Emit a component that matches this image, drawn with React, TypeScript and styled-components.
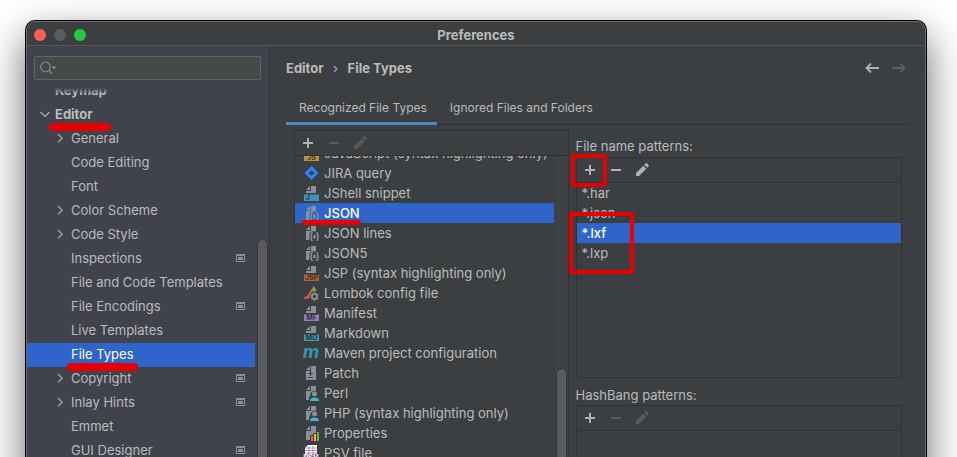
import React from "react";
import styled, { createGlobalStyle, css } from "styled-components";

const GlobalStyle = createGlobalStyle`
  * { box-sizing: border-box; }
  body {
    margin: 0;
    background: #fff;
    font-family: Inter, "Liberation Sans", sans-serif;
    font-size: 13px;
    line-height: 20px;
    color: #bbbbbb;
    overflow: hidden;
  }
  button, input { font: inherit; color: inherit; }
  button { background: none; border: 0; padding: 0; text-align: left; }
  ul { list-style: none; margin: 0; padding: 0; }
`;

const Page = styled.div`
  height: 100vh;
  padding: 21px 31px 0 26px;
  display: flex;
  flex-direction: column;
  overflow: hidden;
`;

const Window = styled.div`
  flex: 1;
  min-height: 0;
  margin-bottom: -80px;
  display: flex;
  flex-direction: column;
  background: #3c3f41;
  border: 1px solid #6b6d6e;
  border-radius: 9px;
  box-shadow: 0 0 0 1px #000, 0 16px 42px rgba(0, 0, 0, 0.62);
`;

const TitleBar = styled.header`
  height: 24px;
  flex: none;
  display: grid;
  grid-template-columns: 1fr auto 1fr;
  align-items: center;
  padding: 2px 7px 0;
  border-bottom: 1px solid #555758;
`;

const Title = styled.h1`
  margin: 0;
  font-size: 13px;
  line-height: 20px;
  font-weight: 700;
`;

const Lights = styled.div`
  display: flex;
  gap: 8px;
`;

const Light = styled.button<{ $color: string }>`
  width: 12px;
  height: 12px;
  border-radius: 50%;
  background: ${(p) => p.$color};
`;

const Body = styled.div`
  flex: 1;
  min-height: 0;
  display: flex;
`;

const Sidebar = styled.nav`
  width: 243px;
  flex: none;
  display: flex;
  flex-direction: column;
  gap: 8px;
  padding-top: 10px;
  background: #40434c;
  border-right: 1px solid #323436;
`;

const SearchBox = styled.label`
  display: flex;
  align-items: center;
  height: 24px;
  margin: 0 8px 0 7px;
  padding-left: 5px;
  border: 1px solid #646464;
  border-radius: 2px;
  background: #45494a;
`;

const SearchInput = styled.input`
  flex: 1;
  min-width: 0;
  border: 0;
  outline: 0;
  background: transparent;
`;

const ScrollArea = styled.div`
  position: relative;
  flex: 1;
  min-height: 0;
  display: flex;
  overflow: hidden;
`;

const Fade = styled.div`
  position: absolute;
  inset: 0 14px auto 0;
  height: 6px;
  background: linear-gradient(#40434c, rgba(64, 67, 76, 0));
`;

const ScrolledList = styled.ul<{ $scroll: number }>`
  flex: 1;
  min-width: 0;
  margin-top: -${(p) => p.$scroll}px;
`;

const Gutter = styled.div<{ $start: number; $tint?: string }>`
  width: 14px;
  flex: none;
  display: flex;
  padding: ${(p) => p.$start}px 2px 0 3px;
  background: ${(p) => p.$tint ?? "transparent"};
`;

const Thumb = styled.div`
  flex: 1;
  background: #585a5c;
  border-radius: 5px 5px 0 0;
  box-shadow: 0 0 0 1px rgba(0, 0, 0, 0.18);
`;

const TreeRow = styled.button<{ $level: number; $selected?: boolean }>`
  position: relative;
  display: flex;
  align-items: center;
  width: 100%;
  height: 24px;
  padding: 0 10px 2px ${(p) => (p.$level === 1 ? 12 : 28)}px;
  white-space: nowrap;
  font-weight: ${(p) => (p.$level === 1 ? 700 : 400)};
  ${(p) =>
    p.$selected &&
    css`
      background: #2f65ca;
      color: #fff;
    `}
`;

const Twisty = styled.span`
  width: 16px;
  height: 12px;
  flex: none;
  display: flex;
`;

const Grow = styled.span`
  flex: 1;
`;

const Main = styled.main`
  flex: 1;
  min-width: 0;
  display: flex;
  flex-direction: column;
  padding: 12px 15px 0 16px;
`;

const Crumbs = styled.div`
  display: flex;
  align-items: center;
  padding-right: 3px;
  font-weight: 700;
`;

const Crumb = styled.a`
  color: inherit;
  text-decoration: none;
`;

const CrumbSep = styled.span`
  width: 24px;
  text-align: center;
  font-weight: 400;
`;

const NavButton = styled.button`
  display: flex;
  margin-left: 11px;
`;

const Tabs = styled.div`
  display: flex;
  margin-top: 17px;
  height: 30px;
  border-bottom: 1px solid #323232;
`;

const Tab = styled.button<{ $active?: boolean }>`
  height: 30px;
  padding: 0 10px 1px 13px;
  border-bottom: 3px solid ${(p) => (p.$active ? "#4a88c7" : "transparent")};
  font-size: 12px;
  white-space: nowrap;
`;

const Columns = styled.div`
  flex: 1;
  min-height: 0;
  display: flex;
  gap: 7px;
  padding: 5px 8px 0;
`;

const Panel = styled.section<{ $wide?: boolean }>`
  display: flex;
  flex-direction: column;
  border: 1px solid #323232;
  border-bottom-width: ${(p) => (p.$wide ? 0 : 1)}px;
  ${(p) =>
    p.$wide &&
    css`
      flex: 273 1 0;
      min-width: 0;
    `}
`;

const Toolbar = styled.div`
  display: flex;
  flex: none;
  gap: 10px;
  height: 25px;
  align-items: center;
  padding-left: 5px;
  border-bottom: 1px solid #323232;
`;

const ToolButton = styled.button<{ $off?: boolean }>`
  position: relative;
  display: flex;
  width: 16px;
  height: 16px;
  color: ${(p) => (p.$off ? "#5a5a5a" : "#afb1b3")};
`;

const TypeRow = styled.button<{ $selected?: boolean }>`
  position: relative;
  display: flex;
  align-items: center;
  gap: 5px;
  width: 100%;
  height: 20px;
  padding-left: 8px;
  white-space: nowrap;
  overflow: visible;
  ${(p) =>
    p.$selected &&
    css`
      background: #2f65ca;
      color: #fff;
      font-weight: 500;
    `}
`;

const PatternColumn = styled.div`
  flex: 327 1 0;
  min-width: 0;
  padding-top: 6px;
`;

const PanelLabel = styled.h2<{ $next?: boolean }>`
  margin: ${(p) => (p.$next ? "7px 0 0" : "0 0 1px")};
  font-size: 13px;
  line-height: 20px;
  font-weight: 400;
`;

const PatternList = styled.ul`
  min-height: 194px;
`;

const PatternRow = styled(TypeRow)`
  padding-left: 5px;
`;

const Stroke = styled.span<{ $top: number; $left: number; $width: number; $height: number }>`
  position: absolute;
  z-index: 2;
  top: ${(p) => p.$top}px;
  left: ${(p) => p.$left}px;
  width: ${(p) => p.$width}px;
  height: ${(p) => p.$height}px;
  background: #e60000;
  border-radius: 4px;
`;

const Frame = styled(Stroke)`
  background: none;
  border: 4px solid #e60000;
  border-radius: 2px;
`;

const Chevron = ({ open }: { open?: boolean }) => (
  <svg width="12" height="12" viewBox="0 0 12 12" fill="none" stroke="#afb1b3" strokeWidth="1.2" aria-hidden>
    <path d={open ? "M1.500 4l4.500 4.500 4.500-4.500" : "M3 2l4.200 4.200L3 10.400"} />
  </svg>
);

const ProjectMark = () => (
  <svg width="9" height="8" viewBox="0 0 9 8" aria-hidden>
    <path d="M0 0h9v8H0zM1 2v5h7V2z" fill="#87939a" fillRule="evenodd" />
    <path d="M2 3h5v3H2z" fill="#87939a" />
  </svg>
);

const PlusIcon = () => (
  <svg width="16" height="16" viewBox="0 0 16 16" aria-hidden>
    <path d="M7 3h2v4h4v2H9v4H7V9H3V7h4z" fill="currentColor" />
  </svg>
);

const MinusIcon = () => (
  <svg width="16" height="16" viewBox="0 0 16 16" aria-hidden>
    <path d="M3 7h10v2H3z" fill="currentColor" />
  </svg>
);

const PencilIcon = () => (
  <svg width="16" height="16" viewBox="0 0 16 16" aria-hidden>
    <path d="M2 14v-3l7.300-7.300 3 3L5 14zM10.200 2.800l1.200-1.200a1.300 1.300 0 0 1 1.800 0l1.200 1.200a1.300 1.300 0 0 1 0 1.800l-1.200 1.200z" fill="currentColor" />
  </svg>
);

const ArrowIcon = ({ back }: { back?: boolean }) => (
  <svg width="16" height="16" viewBox="0 0 16 16" fill="none" stroke={back ? "#afb1b3" : "#5e6062"} strokeWidth="1.800" aria-hidden>
    <path d={back ? "M15 8H3M7 3.500L2.500 8 7 12.500" : "M1 8h12M9 3.500L13.500 8 9 12.500"} />
  </svg>
);

const gray = "#87939a";

const Sheet = ({ short }: { short?: boolean }) => (
  <>
    <path d="M7 1L3 5h4z" fill={gray} />
    <path d={short ? "M8 1v5H3v2h10V1z" : "M8 1v5H3v9h10V1z"} fill={gray} />
  </>
);

const Badge = ({ text, color }: { text: string; color: string }) => (
  <>
    <Sheet short />
    <path d="M1 9.500h15V16H1z" fill={color} />
    <text x={text.length === 1 ? 3 : 8.5} y="15.300" textAnchor={text.length === 1 ? "start" : "middle"} fontSize="7" fontWeight="600" fill="#2b2d30">
      {text}
    </text>
  </>
);

const Gear = () => (
  <>
    <circle cx="11.500" cy="11.500" r="4.900" fill="#3c3f41" />
    <circle cx="11.500" cy="11.500" r="2.600" fill="none" stroke={gray} strokeWidth="1.800" />
    <path d="M11.500 7.300v2M11.500 13.700v2M7.900 9.400l1.700 1M13.400 12.600l1.700 1M7.900 13.600l1.700-1M13.400 10.400l1.700-1" stroke={gray} strokeWidth="1.600" />
  </>
);

const drawings: Record<string, React.ReactNode> = {
  js: <Badge text="JS" color="#c2923c" />,
  jira: <path d="M8.500 1L15.500 8l-7 7-7-7zM8.500 5.200L5.700 8l2.800 2.800L11.300 8z" fill="#2684ff" fillRule="evenodd" />,
  jshell: <Badge text="J" color="#3e93b4" />,
  json: (
    <>
      <Sheet />
      <path d="M8 6.500h8V16H6.300V9z" fill="var(--row, #3c3f41)" />
      <path d="M9.800 7.700c-1.800 0-1.400 1.100-1.400 2.100 0 1-.3 1.700-1.400 1.800 1.100.100 1.400.8 1.400 1.800 0 1-.4 2.100 1.400 2.100M13.200 7.700c1.800 0 1.400 1.100 1.400 2.100 0 1 .3 1.700 1.400 1.800-1.100.100-1.400.8-1.400 1.800 0 1 .4 2.100-1.400 2.100" stroke={gray} strokeWidth="1.400" fill="none" />
      <path d="M11.500 9.600v4M9.800 10.600l3.400 2M9.800 12.600l3.400-2" stroke={gray} strokeWidth="1.100" />
    </>
  ),
  jsp: <Badge text="JSP" color="#b85f2f" />,
  lombok: (
    <>
      <path d="M9.500 4c2.600 0 3.700 1.800 2.400 3.800C9.800 11 7.500 13.400 4 13.800c-1.500.2-3-.1-4-.9 2.800-.4 4.600-2.200 5.800-4.300C7 6.500 7.700 4.400 9.500 4z" fill="#e05555" />
      <path d="M10.500.2c.4 1.700 2.200 3.200 3.200 5.200-1.700.5-3.900.2-5.500-.7 1-1 2-2.400 2.300-4.500z" fill="#62b543" />
      <Gear />
    </>
  ),
  manifest: <Badge text="MF" color="#957dc0" />,
  markdown: <Badge text="MD" color="#3e93b4" />,
  maven: (
    <text x="8" y="13" textAnchor="middle" fontSize="18" fontWeight="700" fontStyle="italic" fill="#3e93b4">
      m
    </text>
  ),
  patch: (
    <>
      <Sheet />
      <path d="M7.500 6v5M5 8.500h5M5 12.500h5" stroke="#3c3f41" strokeWidth="1.200" />
    </>
  ),
  person: (
    <>
      <Sheet />
      <path d="M8 7.500a4 4 0 0 1 7 0V16H6v-3z" fill="#3c3f41" />
      <circle cx="11.500" cy="8.700" r="2.500" fill={gray} />
      <path d="M7 16c0-2.200 1.500-3.500 4.500-3.500S16 13.800 16 16z" fill="#40b6e0" />
    </>
  ),
  properties: (
    <>
      <Sheet />
      <path d="M7 10h3V8h3V6h3v10H7z" fill="#3c3f41" />
      <path d="M8 11h2v5H8z" fill="#f26522" />
      <path d="M11 9h2v7h-2z" fill="#f4af3d" />
      <path d="M14 7h2v9h-2z" fill="#62b543" />
    </>
  ),
  psv: (
    <>
      <path d="M5 0h9v9H2V3z" fill="#fff" />
      <path d="M2 3h12M2 5.500h12M2 8h12M6 1v8M10 1v8" stroke="#8b6a8e" strokeWidth=".7" />
      <path d="M0 9h16v7H0z" fill="#8a5a86" />
      <text x="8" y="15" textAnchor="middle" fontSize="7" fontWeight="700" fill="#fff">
        PSV
      </text>
    </>
  ),
};

const TypeIcon = styled.svg<{ $selected?: boolean }>`
  flex: none;
  --row: ${(p) => (p.$selected ? "#2f65ca" : "#3c3f41")};
`;

type TreeItem = { name: string; level?: number; arrow?: "open" | "closed"; mark?: boolean; selected?: boolean; stroke?: [number, number] };

const tree: TreeItem[] = [
  { name: "Keymap", level: 1 },
  { name: "Editor", level: 1, arrow: "open", stroke: [22, 62] },
  { name: "General", arrow: "closed" },
  { name: "Code Editing" },
  { name: "Font" },
  { name: "Color Scheme", arrow: "closed" },
  { name: "Code Style", arrow: "closed" },
  { name: "Inspections", mark: true },
  { name: "File and Code Templates" },
  { name: "File Encodings", mark: true },
  { name: "Live Templates" },
  { name: "File Types", selected: true, stroke: [40, 71] },
  { name: "Copyright", arrow: "closed", mark: true },
  { name: "Inlay Hints", arrow: "closed", mark: true },
  { name: "Emmet" },
  { name: "GUI Designer", mark: true },
];

const types: [string, string][] = [
  ["js", "JavaScript (syntax highlighting only)"],
  ["jira", "JIRA query"],
  ["jshell", "JShell snippet"],
  ["json", "JSON"],
  ["json", "JSON lines"],
  ["json", "JSON5"],
  ["jsp", "JSP (syntax highlighting only)"],
  ["lombok", "Lombok config file"],
  ["manifest", "Manifest"],
  ["markdown", "Markdown"],
  ["maven", "Maven project configuration"],
  ["patch", "Patch"],
  ["person", "Perl"],
  ["person", "PHP (syntax highlighting only)"],
  ["properties", "Properties"],
  ["psv", "PSV file"],
];

const patterns = ["*.har", "*.json", "*.lxf", "*.lxp"];

const Tools = ({ editable, framed }: { editable?: boolean; framed?: boolean }) => (
  <Toolbar>
    <ToolButton aria-label="Add">
      <PlusIcon />
      {framed && <Frame $top={-8} $left={-11} $width={36} $height={33} />}
    </ToolButton>
    <ToolButton aria-label="Remove" $off={!editable}>
      <MinusIcon />
    </ToolButton>
    <ToolButton aria-label="Edit" $off={!editable}>
      <PencilIcon />
    </ToolButton>
  </Toolbar>
);

export default function App() {
  return (
    <Page>
      <GlobalStyle />
      <Window>
        <TitleBar>
          <Lights>
            <Light $color="#ff5f57" aria-label="Close" />
            <Light $color="#5a5c5e" aria-label="Minimize" />
            <Light $color="#28c840" aria-label="Zoom" />
          </Lights>
          <Title>Preferences</Title>
        </TitleBar>
        <Body>
          <Sidebar>
            <SearchBox>
              <svg width="18" height="14" viewBox="0 0 18 14" fill="none" aria-hidden>
                <circle cx="5.500" cy="6" r="4.800" stroke="#7f8b91" strokeWidth="1.200" />
                <path d="M9 9.500l3 3" stroke="#7f8b91" strokeWidth="1.400" />
                <path d="M11.500 5.500h5L14 8.500z" fill="#7f8b91" />
              </svg>
              <SearchInput type="text" aria-label="Search settings" />
            </SearchBox>
            <ScrollArea>
              <ScrolledList $scroll={9}>
                {tree.map((item) => (
                  <li key={item.name}>
                    <TreeRow $level={item.level ?? 2} $selected={item.selected}>
                      <Twisty>{item.arrow && <Chevron open={item.arrow === "open"} />}</Twisty>
                      <span>{item.name}</span>
                      <Grow />
                      {item.mark && <ProjectMark />}
                      {item.stroke && <Stroke $top={20} $left={item.stroke[0]} $width={item.stroke[1]} $height={8} />}
                    </TreeRow>
                  </li>
                ))}
              </ScrolledList>
              <Gutter $start={152}>
                <Thumb />
              </Gutter>
              <Fade />
            </ScrollArea>
          </Sidebar>
          <Main>
            <Crumbs>
              <Crumb href="#editor">Editor</Crumb>
              <CrumbSep>›</CrumbSep>
              <Crumb href="#file-types">File Types</Crumb>
              <Grow />
              <NavButton aria-label="Back">
                <ArrowIcon back />
              </NavButton>
              <NavButton aria-label="Forward">
                <ArrowIcon />
              </NavButton>
            </Crumbs>
            <Tabs role="tablist">
              <Tab role="tab" aria-selected $active>
                Recognized File Types
              </Tab>
              <Tab role="tab" aria-selected={false}>
                Ignored Files and Folders
              </Tab>
            </Tabs>
            <Columns>
              <Panel $wide>
                <Tools />
                <ScrollArea>
                  <ScrolledList $scroll={13}>
                    {types.map(([icon, name]) => (
                      <li key={name}>
                        <TypeRow $selected={name === "JSON"}>
                          <TypeIcon width="16" height="16" viewBox="0 0 16 16" $selected={name === "JSON"} aria-hidden>
                            {drawings[icon]}
                          </TypeIcon>
                          {name}
                          {name === "JSON" && <Stroke $top={17} $left={7} $width={59} $height={5} />}
                        </TypeRow>
                      </li>
                    ))}
                  </ScrolledList>
                  <Gutter $start={213} $tint="#3f4244">
                    <Thumb />
                  </Gutter>
                </ScrollArea>
              </Panel>
              <PatternColumn>
                <PanelLabel>File name patterns:</PanelLabel>
                <Panel>
                  <Tools editable framed />
                  <PatternList>
                    {patterns.map((name) => (
                      <li key={name}>
                        <PatternRow $selected={name === "*.lxf"}>
                          {name}
                          {name === "*.lxf" && <Frame $top={-11} $left={-8} $width={65} $height={62} />}
                        </PatternRow>
                      </li>
                    ))}
                  </PatternList>
                </Panel>
                <PanelLabel $next>HashBang patterns:</PanelLabel>
                <Panel>
                  <Tools />
                  <PatternList />
                </Panel>
              </PatternColumn>
            </Columns>
          </Main>
        </Body>
      </Window>
    </Page>
  );
}
